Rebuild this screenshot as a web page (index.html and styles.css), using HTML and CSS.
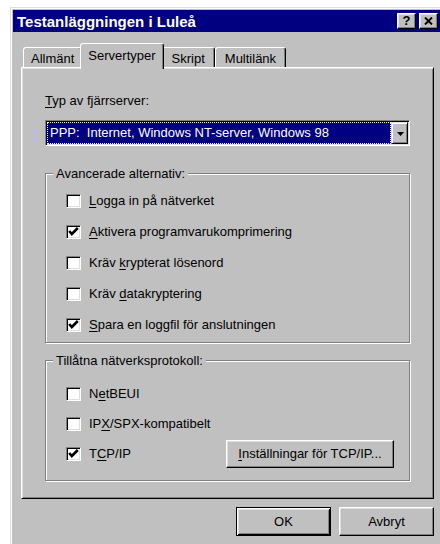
FILE: index.html
```html
<!DOCTYPE html>
<html lang="sv">
<head>
<meta charset="utf-8">
<title>Testanläggningen i Luleå</title>
<link rel="stylesheet" href="styles.css">
</head>
<body>
<div class="window">
  <div class="titlebar">
    <span class="title">Testanläggningen i Luleå</span>
    <div class="caption-buttons">
      <button class="cap-btn cap-help" type="button">?</button>
      <button class="cap-btn" type="button" aria-label="Stäng">
        <svg width="9" height="8" viewBox="0 0 9 8"><path d="M1 0.5 L8 7.5 M8 0.5 L1 7.5" stroke="#000" stroke-width="1.9" fill="none"/></svg>
      </button>
    </div>
  </div>

  <div class="dialog-body">
    <div class="tabs">
      <div class="tab">Allmänt</div>
      <div class="tab active">Servertyper</div>
      <div class="tab tab-wide">Skript</div>
      <div class="tab tab-wide">Multilänk</div>
    </div>

    <div class="panel">
      <div class="field-label"><u>T</u>yp av fjärrserver:</div>
      <div class="combo">
        <div class="combo-field">PPP:  Internet, Windows NT-server, Windows 98</div>
        <div class="combo-btn">
          <svg width="7" height="4" viewBox="0 0 7 4"><polygon points="0,0 7,0 3.5,4" fill="#000"/></svg>
        </div>
      </div>

      <div class="group">
        <div class="group-title">Avancerade alternativ:</div>
        <div class="options">
          <div class="row"><span class="box"></span><span><u>L</u>ogga in på nätverket</span></div>
          <div class="row"><span class="box"><svg class="tick" viewBox="0 0 13 12"><polyline points="2.2,5 4.8,8 10.8,2" fill="none" stroke="#000" stroke-width="2.6"/></svg></span><span><u>A</u>ktivera programvarukomprimering</span></div>
          <div class="row"><span class="box"></span><span>Kräv <u>k</u>rypterat lösenord</span></div>
          <div class="row"><span class="box"></span><span>Kräv <u>d</u>atakryptering</span></div>
          <div class="row"><span class="box"><svg class="tick" viewBox="0 0 13 12"><polyline points="2.2,5 4.8,8 10.8,2" fill="none" stroke="#000" stroke-width="2.6"/></svg></span><span><u>S</u>para en loggfil för anslutningen</span></div>
        </div>
      </div>

      <div class="group group-protocols">
        <div class="group-title">Tillåtna nätverksprotokoll:</div>
        <div class="options">
          <div class="row"><span class="box"></span><span>N<u>e</u>tBEUI</span></div>
          <div class="row"><span class="box"></span><span>IP<u>X</u>/SPX-kompatibelt</span></div>
          <div class="row"><span class="box"><svg class="tick" viewBox="0 0 13 12"><polyline points="2.2,5 4.8,8 10.8,2" fill="none" stroke="#000" stroke-width="2.6"/></svg></span><span>T<u>C</u>P/IP</span>
            <button class="btn btn-settings" type="button"><u>I</u>nställningar för TCP/IP...</button>
          </div>
        </div>
      </div>
    </div>

    <div class="actions">
      <button class="btn btn-default" type="button">OK</button>
      <button class="btn" type="button">Avbryt</button>
    </div>
  </div>
</div>
</body>
</html>
```

FILE: styles.css
```css
* {
  box-sizing: border-box;
}

html,
body {
  margin: 0;
  height: 100%;
}

body {
  background: #fff;
  overflow: hidden;
  font: 13px/16px "Liberation Sans", Arial, sans-serif;
  color: #000;
}

u {
  text-decoration-thickness: 1px;
  text-underline-offset: 2px;
}

/* outer dialog frame */
.window {
  width: 434px;
  margin: 7px 0 0 10px;
  padding: 2px 2px 14px;
  background: #c0c0c0;
  border: 1px solid;
  border-color: #dfdfdf #000 #000 #dfdfdf;
  box-shadow: inset 1px 1px #fff, inset -1px -1px #808080;
}

/* caption */
.titlebar {
  height: 22px;
  display: flex;
  align-items: center;
  padding: 0 3px;
  background: #000080;
  color: #fff;
}

.title {
  flex: 1;
  padding: 1px 0 0 1px;
  font-weight: bold;
  font-size: 15px;
  line-height: 21px;
  white-space: nowrap;
}

.caption-buttons {
  display: flex;
  gap: 3px;
}

.cap-btn {
  width: 19px;
  height: 16px;
  padding: 0;
  display: flex;
  align-items: center;
  justify-content: center;
  background: #c0c0c0;
  border: 1px solid;
  border-color: #fff #000 #000 #fff;
  box-shadow: inset -1px -1px #808080, inset 1px 1px #dfdfdf;
  color: #000;
  font: bold 13px/14px "Liberation Sans", Arial, sans-serif;
}

.cap-btn svg {
  display: block;
}

/* dialog content */
.dialog-body {
  padding: 11px 7px 0 8px;
}

.tabs {
  display: flex;
  align-items: flex-end;
  height: 24px;
  padding-left: 2px;
}

.tab {
  height: 20px;
  padding: 3px 7px 0;
  border: 1px solid;
  border-bottom: 0;
  border-color: #fff #000 #000 #fff;
  border-radius: 3px 3px 0 0;
  box-shadow: inset -1px 0 #808080;
  background: #c0c0c0;
  white-space: nowrap;
}

.tab-wide {
  padding: 3px 9px 0;
}

.tab.active {
  position: relative;
  z-index: 1;
  height: 26px;
  margin: 0 -2px -2px;
  padding-top: 4px;
}

.panel {
  display: flex;
  flex-direction: column;
  padding: 25px 23px 17px;
  border: 1px solid;
  border-color: #fff #000 #000 #fff;
  box-shadow: inset 1px 1px #dfdfdf, inset -1px -1px #808080;
}

.field-label {
  line-height: 16px;
  white-space: nowrap;
}

/* drop-down list */
.combo {
  display: flex;
  height: 26px;
  margin-top: 11px;
  padding: 1px;
  background: #fff;
  border: 1px solid;
  border-color: #808080 #fff #fff #808080;
  box-shadow: inset 1px 1px #000, inset -1px -1px #dfdfdf;
}

.combo-field {
  flex: 1;
  padding-left: 2px;
  background: #000080;
  color: #fff;
  border: 1px dotted #ffff80;
  line-height: 20px;
  white-space: pre;
  overflow: hidden;
}

.combo-btn {
  width: 17px;
  display: flex;
  align-items: center;
  justify-content: center;
  background: #c0c0c0;
  border: 1px solid;
  border-color: #dfdfdf #000 #000 #dfdfdf;
  box-shadow: inset 1px 1px #fff, inset -1px -1px #808080;
}

.combo-btn svg {
  display: block;
  margin: 1px 0 0 1px;
}

/* etched group boxes */
.group {
  display: flex;
  flex-direction: column;
  margin-top: 27px;
  padding: 0 15px 9px 7px;
  border: 1px solid #808080;
  box-shadow: inset 1px 1px #fff, 1px 1px #fff;
}

.group + .group {
  margin-top: 17px;
}

.group-title {
  align-self: flex-start;
  margin-top: -10px;
  padding: 0 3px;
  line-height: 20px;
  background: #c0c0c0;
  white-space: nowrap;
}

.options {
  display: flex;
  flex-direction: column;
  gap: 15px;
  margin-top: 9px;
  padding-left: 13px;
}

.group-protocols {
  padding-bottom: 18px;
}

.group-protocols .options {
  gap: 14px;
  margin-top: 15px;
}

.row {
  display: flex;
  align-items: center;
  gap: 8px;
  height: 16px;
  white-space: nowrap;
}

/* check boxes */
.box {
  flex: none;
  width: 15px;
  height: 14px;
  background: #fff;
  border: 1px solid;
  border-color: #808080 #fff #fff #808080;
  box-shadow: inset 1px 1px #000, inset -1px -1px #dfdfdf;
}

.tick {
  display: block;
  width: 13px;
  height: 12px;
}

/* push buttons */
.btn {
  padding: 0;
  font: inherit;
  color: #000;
  background: #c0c0c0;
  border: 1px solid;
  border-color: #fff #000 #000 #fff;
  box-shadow: inset -1px -1px #808080, inset 1px 1px #dfdfdf;
  white-space: nowrap;
}

.btn-settings {
  width: 168px;
  height: 28px;
  margin: -6px 0 -6px auto;
}

.actions {
  display: flex;
  justify-content: flex-end;
  gap: 8px;
  margin-top: 8px;
}

.actions .btn {
  width: 95px;
  height: 29px;
}

.btn-default {
  border-color: #000;
  box-shadow: inset 1px 1px #fff, inset -1px -1px #000, inset 2px 2px #dfdfdf, inset -2px -2px #808080;
}
```
